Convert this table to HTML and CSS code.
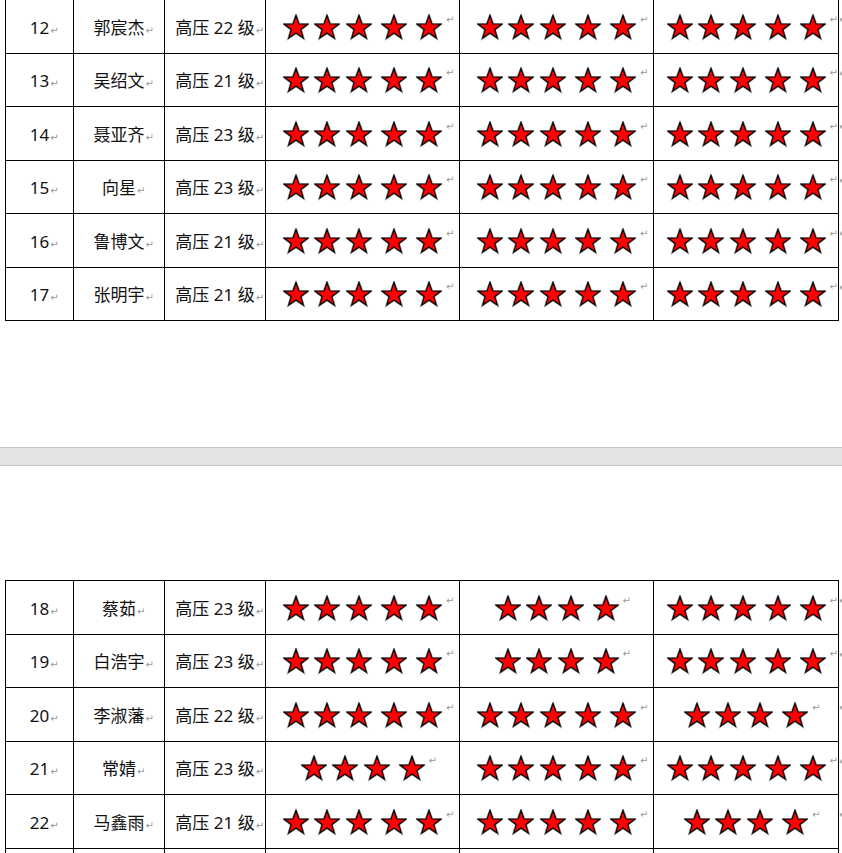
FILE: index.html
```html
<!DOCTYPE html>
<html lang="zh-CN">
<head>
  <meta charset="UTF-8" />
  <title>评分表</title>
  <link rel="stylesheet" href="styles.css">
</head>
<body>

  <svg class="defs" width="0" height="0" aria-hidden="true">
    <symbol id="star" viewBox="0 0 26 27">
      <path class="star-shade" d="M13 1.7L15.94 9.95L24.7 10.2L17.76 15.55L20.23 23.95L13 19L5.77 23.95L8.24 15.55L1.3 10.2L10.06 9.95Z" />
      <path class="star-body" d="M13 1.7L15.94 9.95L24.7 10.2L17.76 15.55L20.23 23.95L13 19L5.77 23.95L8.24 15.55L1.3 10.2L10.06 9.95Z" />
    </symbol>
  </svg>

  <div class="page page-top">
    <table class="score">
      <colgroup>
        <col class="c-num"><col class="c-name"><col class="c-class">
        <col class="c-star"><col class="c-star"><col class="c-last">
      </colgroup>
      <tr>
        <td>12<span class="pm">↵</span></td>
        <td>郭宸杰<span class="pm">↵</span></td>
        <td>高压 22 级<span class="pm">↵</span></td>
        <td class="rate"><div class="stars"><svg class="star"><use href="#star"/></svg><svg class="star"><use href="#star"/></svg><svg class="star"><use href="#star"/></svg><svg class="star"><use href="#star"/></svg><svg class="star"><use href="#star"/></svg><span class="pm">↵</span></div></td>
        <td class="rate"><div class="stars"><svg class="star"><use href="#star"/></svg><svg class="star"><use href="#star"/></svg><svg class="star"><use href="#star"/></svg><svg class="star"><use href="#star"/></svg><svg class="star"><use href="#star"/></svg><span class="pm">↵</span></div></td>
        <td class="rate"><div class="stars"><svg class="star"><use href="#star"/></svg><svg class="star"><use href="#star"/></svg><svg class="star"><use href="#star"/></svg><svg class="star"><use href="#star"/></svg><svg class="star"><use href="#star"/></svg><span class="pm">↵</span></div><span class="row-end">↵</span></td>
      </tr>
      <tr>
        <td>13<span class="pm">↵</span></td>
        <td>吴绍文<span class="pm">↵</span></td>
        <td>高压 21 级<span class="pm">↵</span></td>
        <td class="rate"><div class="stars"><svg class="star"><use href="#star"/></svg><svg class="star"><use href="#star"/></svg><svg class="star"><use href="#star"/></svg><svg class="star"><use href="#star"/></svg><svg class="star"><use href="#star"/></svg><span class="pm">↵</span></div></td>
        <td class="rate"><div class="stars"><svg class="star"><use href="#star"/></svg><svg class="star"><use href="#star"/></svg><svg class="star"><use href="#star"/></svg><svg class="star"><use href="#star"/></svg><svg class="star"><use href="#star"/></svg><span class="pm">↵</span></div></td>
        <td class="rate"><div class="stars"><svg class="star"><use href="#star"/></svg><svg class="star"><use href="#star"/></svg><svg class="star"><use href="#star"/></svg><svg class="star"><use href="#star"/></svg><svg class="star"><use href="#star"/></svg><span class="pm">↵</span></div><span class="row-end">↵</span></td>
      </tr>
      <tr>
        <td>14<span class="pm">↵</span></td>
        <td>聂亚齐<span class="pm">↵</span></td>
        <td>高压 23 级<span class="pm">↵</span></td>
        <td class="rate"><div class="stars"><svg class="star"><use href="#star"/></svg><svg class="star"><use href="#star"/></svg><svg class="star"><use href="#star"/></svg><svg class="star"><use href="#star"/></svg><svg class="star"><use href="#star"/></svg><span class="pm">↵</span></div></td>
        <td class="rate"><div class="stars"><svg class="star"><use href="#star"/></svg><svg class="star"><use href="#star"/></svg><svg class="star"><use href="#star"/></svg><svg class="star"><use href="#star"/></svg><svg class="star"><use href="#star"/></svg><span class="pm">↵</span></div></td>
        <td class="rate"><div class="stars"><svg class="star"><use href="#star"/></svg><svg class="star"><use href="#star"/></svg><svg class="star"><use href="#star"/></svg><svg class="star"><use href="#star"/></svg><svg class="star"><use href="#star"/></svg><span class="pm">↵</span></div><span class="row-end">↵</span></td>
      </tr>
      <tr>
        <td>15<span class="pm">↵</span></td>
        <td>向星<span class="pm">↵</span></td>
        <td>高压 23 级<span class="pm">↵</span></td>
        <td class="rate"><div class="stars"><svg class="star"><use href="#star"/></svg><svg class="star"><use href="#star"/></svg><svg class="star"><use href="#star"/></svg><svg class="star"><use href="#star"/></svg><svg class="star"><use href="#star"/></svg><span class="pm">↵</span></div></td>
        <td class="rate"><div class="stars"><svg class="star"><use href="#star"/></svg><svg class="star"><use href="#star"/></svg><svg class="star"><use href="#star"/></svg><svg class="star"><use href="#star"/></svg><svg class="star"><use href="#star"/></svg><span class="pm">↵</span></div></td>
        <td class="rate"><div class="stars"><svg class="star"><use href="#star"/></svg><svg class="star"><use href="#star"/></svg><svg class="star"><use href="#star"/></svg><svg class="star"><use href="#star"/></svg><svg class="star"><use href="#star"/></svg><span class="pm">↵</span></div><span class="row-end">↵</span></td>
      </tr>
      <tr>
        <td>16<span class="pm">↵</span></td>
        <td>鲁博文<span class="pm">↵</span></td>
        <td>高压 21 级<span class="pm">↵</span></td>
        <td class="rate"><div class="stars"><svg class="star"><use href="#star"/></svg><svg class="star"><use href="#star"/></svg><svg class="star"><use href="#star"/></svg><svg class="star"><use href="#star"/></svg><svg class="star"><use href="#star"/></svg><span class="pm">↵</span></div></td>
        <td class="rate"><div class="stars"><svg class="star"><use href="#star"/></svg><svg class="star"><use href="#star"/></svg><svg class="star"><use href="#star"/></svg><svg class="star"><use href="#star"/></svg><svg class="star"><use href="#star"/></svg><span class="pm">↵</span></div></td>
        <td class="rate"><div class="stars"><svg class="star"><use href="#star"/></svg><svg class="star"><use href="#star"/></svg><svg class="star"><use href="#star"/></svg><svg class="star"><use href="#star"/></svg><svg class="star"><use href="#star"/></svg><span class="pm">↵</span></div><span class="row-end">↵</span></td>
      </tr>
      <tr>
        <td>17<span class="pm">↵</span></td>
        <td>张明宇<span class="pm">↵</span></td>
        <td>高压 21 级<span class="pm">↵</span></td>
        <td class="rate"><div class="stars"><svg class="star"><use href="#star"/></svg><svg class="star"><use href="#star"/></svg><svg class="star"><use href="#star"/></svg><svg class="star"><use href="#star"/></svg><svg class="star"><use href="#star"/></svg><span class="pm">↵</span></div></td>
        <td class="rate"><div class="stars"><svg class="star"><use href="#star"/></svg><svg class="star"><use href="#star"/></svg><svg class="star"><use href="#star"/></svg><svg class="star"><use href="#star"/></svg><svg class="star"><use href="#star"/></svg><span class="pm">↵</span></div></td>
        <td class="rate"><div class="stars"><svg class="star"><use href="#star"/></svg><svg class="star"><use href="#star"/></svg><svg class="star"><use href="#star"/></svg><svg class="star"><use href="#star"/></svg><svg class="star"><use href="#star"/></svg><span class="pm">↵</span></div><span class="row-end">↵</span></td>
      </tr>
    </table>
  </div>

  <div class="page-gap"></div>

  <div class="page page-bottom">
    <table class="score">
      <colgroup>
        <col class="c-num"><col class="c-name"><col class="c-class">
        <col class="c-star"><col class="c-star"><col class="c-last">
      </colgroup>
      <tr>
        <td>18<span class="pm">↵</span></td>
        <td>蔡茹<span class="pm">↵</span></td>
        <td>高压 23 级<span class="pm">↵</span></td>
        <td class="rate"><div class="stars"><svg class="star"><use href="#star"/></svg><svg class="star"><use href="#star"/></svg><svg class="star"><use href="#star"/></svg><svg class="star"><use href="#star"/></svg><svg class="star"><use href="#star"/></svg><span class="pm">↵</span></div></td>
        <td class="rate"><div class="stars"><svg class="star"><use href="#star"/></svg><svg class="star"><use href="#star"/></svg><svg class="star"><use href="#star"/></svg><svg class="star"><use href="#star"/></svg><span class="pm">↵</span></div></td>
        <td class="rate"><div class="stars"><svg class="star"><use href="#star"/></svg><svg class="star"><use href="#star"/></svg><svg class="star"><use href="#star"/></svg><svg class="star"><use href="#star"/></svg><svg class="star"><use href="#star"/></svg><span class="pm">↵</span></div><span class="row-end">↵</span></td>
      </tr>
      <tr>
        <td>19<span class="pm">↵</span></td>
        <td>白浩宇<span class="pm">↵</span></td>
        <td>高压 23 级<span class="pm">↵</span></td>
        <td class="rate"><div class="stars"><svg class="star"><use href="#star"/></svg><svg class="star"><use href="#star"/></svg><svg class="star"><use href="#star"/></svg><svg class="star"><use href="#star"/></svg><svg class="star"><use href="#star"/></svg><span class="pm">↵</span></div></td>
        <td class="rate"><div class="stars"><svg class="star"><use href="#star"/></svg><svg class="star"><use href="#star"/></svg><svg class="star"><use href="#star"/></svg><svg class="star"><use href="#star"/></svg><span class="pm">↵</span></div></td>
        <td class="rate"><div class="stars"><svg class="star"><use href="#star"/></svg><svg class="star"><use href="#star"/></svg><svg class="star"><use href="#star"/></svg><svg class="star"><use href="#star"/></svg><svg class="star"><use href="#star"/></svg><span class="pm">↵</span></div><span class="row-end">↵</span></td>
      </tr>
      <tr>
        <td>20<span class="pm">↵</span></td>
        <td>李淑藩<span class="pm">↵</span></td>
        <td>高压 22 级<span class="pm">↵</span></td>
        <td class="rate"><div class="stars"><svg class="star"><use href="#star"/></svg><svg class="star"><use href="#star"/></svg><svg class="star"><use href="#star"/></svg><svg class="star"><use href="#star"/></svg><svg class="star"><use href="#star"/></svg><span class="pm">↵</span></div></td>
        <td class="rate"><div class="stars"><svg class="star"><use href="#star"/></svg><svg class="star"><use href="#star"/></svg><svg class="star"><use href="#star"/></svg><svg class="star"><use href="#star"/></svg><svg class="star"><use href="#star"/></svg><span class="pm">↵</span></div></td>
        <td class="rate"><div class="stars"><svg class="star"><use href="#star"/></svg><svg class="star"><use href="#star"/></svg><svg class="star"><use href="#star"/></svg><svg class="star"><use href="#star"/></svg><span class="pm">↵</span></div><span class="row-end">↵</span></td>
      </tr>
      <tr>
        <td>21<span class="pm">↵</span></td>
        <td>常婧<span class="pm">↵</span></td>
        <td>高压 23 级<span class="pm">↵</span></td>
        <td class="rate"><div class="stars"><svg class="star"><use href="#star"/></svg><svg class="star"><use href="#star"/></svg><svg class="star"><use href="#star"/></svg><svg class="star"><use href="#star"/></svg><span class="pm">↵</span></div></td>
        <td class="rate"><div class="stars"><svg class="star"><use href="#star"/></svg><svg class="star"><use href="#star"/></svg><svg class="star"><use href="#star"/></svg><svg class="star"><use href="#star"/></svg><svg class="star"><use href="#star"/></svg><span class="pm">↵</span></div></td>
        <td class="rate"><div class="stars"><svg class="star"><use href="#star"/></svg><svg class="star"><use href="#star"/></svg><svg class="star"><use href="#star"/></svg><svg class="star"><use href="#star"/></svg><svg class="star"><use href="#star"/></svg><span class="pm">↵</span></div><span class="row-end">↵</span></td>
      </tr>
      <tr>
        <td>22<span class="pm">↵</span></td>
        <td>马鑫雨<span class="pm">↵</span></td>
        <td>高压 21 级<span class="pm">↵</span></td>
        <td class="rate"><div class="stars"><svg class="star"><use href="#star"/></svg><svg class="star"><use href="#star"/></svg><svg class="star"><use href="#star"/></svg><svg class="star"><use href="#star"/></svg><svg class="star"><use href="#star"/></svg><span class="pm">↵</span></div></td>
        <td class="rate"><div class="stars"><svg class="star"><use href="#star"/></svg><svg class="star"><use href="#star"/></svg><svg class="star"><use href="#star"/></svg><svg class="star"><use href="#star"/></svg><svg class="star"><use href="#star"/></svg><span class="pm">↵</span></div></td>
        <td class="rate"><div class="stars"><svg class="star"><use href="#star"/></svg><svg class="star"><use href="#star"/></svg><svg class="star"><use href="#star"/></svg><svg class="star"><use href="#star"/></svg><span class="pm">↵</span></div><span class="row-end">↵</span></td>
      </tr>
      <tr>
        <td></td><td></td><td></td><td></td><td></td><td></td>
      </tr>
    </table>
  </div>

</body>
</html>
```

FILE: styles.css
```css
body {
  margin: 0;
  background: #fff;
  color: #111;
  font-family: "Noto Sans", "Noto Sans CJK SC", sans-serif;
  font-size: 17px;
  overflow: hidden;
}

.defs {
  position: absolute;
  width: 0;
  height: 0;
}

.page {
  padding-left: 5px;
}

.page-top {
  padding-bottom: 126px;
}

.page-top .score {
  margin-top: -1px;
}

.page-gap {
  height: 17px;
  background: #e4e4e4;
  border-top: 1px solid #c6c6c6;
  border-bottom: 1px solid #c6c6c6;
}

.page-bottom {
  padding-top: 114px;
}

.score {
  border-collapse: collapse;
  table-layout: fixed;
  width: 833px;
}

.c-num { width: 68px; }
.c-name { width: 91px; }
.c-class { width: 101px; }
.c-star { width: 194px; }
.c-last { width: 185px; }

.score tr {
  height: 53.5px;
}

.score td {
  border: 1px solid #000;
  padding: 6px 0 0;
  text-align: center;
  vertical-align: middle;
  white-space: nowrap;
  line-height: 20px;
}

.score td:last-child {
  position: relative;
}

.pm {
  display: inline-block;
  width: 0;
  text-indent: 1px;
  font-family: "DejaVu Sans", sans-serif;
  font-size: 10px;
  color: #999;
  vertical-align: baseline;
}

.rate {
  padding-top: 8px;
}

.stars {
  display: inline-flex;
  align-items: flex-start;
}

.star {
  width: 26px;
  height: 27px;
}

.star + .star { margin-left: 5px; }
.star:nth-child(3) { margin-left: 6px; }
.star:nth-child(4) { margin-left: 9px; }
.star:nth-child(5) { margin-left: 9px; }

.star-shade {
  fill: none;
  stroke: #8a8a8a;
  stroke-width: 2.4;
  stroke-linejoin: miter;
}

.star-body {
  fill: #ff0000;
  stroke: #000;
  stroke-width: 1.1;
  stroke-linejoin: miter;
}

.stars .pm {
  margin-top: 0;
  text-indent: 4px;
  line-height: 12px;
}

.row-end {
  position: absolute;
  left: 100%;
  top: 10px;
  margin-left: 1px;
  font-family: "DejaVu Sans", sans-serif;
  font-size: 10px;
  color: #999;
}
```
